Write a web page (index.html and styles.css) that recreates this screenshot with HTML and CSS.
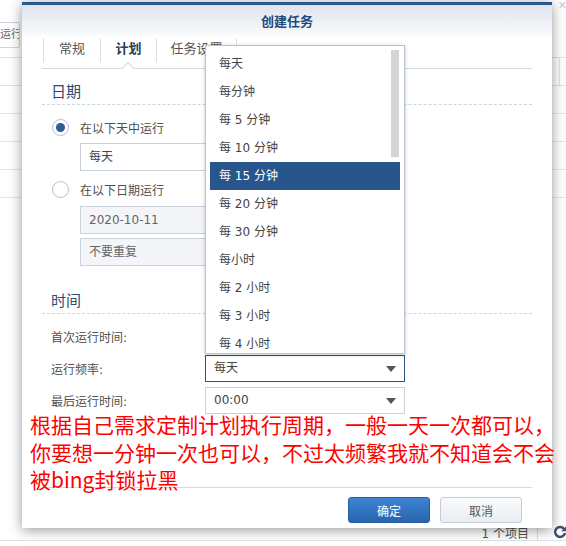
FILE: index.html
```html
<!DOCTYPE html>
<html lang="zh-CN">
<head>
<meta charset="utf-8">
<title>创建任务</title>
<link rel="stylesheet" href="styles.css">
</head>
<body>
<div class="app">
  <div class="app-title"><span class="app-close">✕</span></div>
  <div class="toolbar"><span class="tb-btn">运行</span></div>
  <div class="table">
    <div class="thead"><div class="th-cell"></div></div>
    <div class="trow"></div>
    <div class="trow"></div>
    <div class="trow"></div>
    <div class="trow"></div>
  </div>
  <div class="status">
    <span class="count">1 个项目</span>
    <span class="status-sep"></span>
    <svg class="refresh" width="14" height="14" viewBox="0 0 14 14"><path d="M11.3 4.2A5 5 0 1 0 12 8" fill="none" stroke="#3a5173" stroke-width="2.4"/><path d="M13.2 1.2V6.2H8.2Z" fill="#3a5173"/></svg>
  </div>
</div>

<div class="dialog">
  <div class="dlg-head">创建任务</div>
  <div class="tabs">
    <div class="tab t1">常规</div>
    <div class="tab t2 active">计划</div>
    <div class="tab t3">任务设置</div>
  </div>
  <div class="dlg-body">
    <div class="section-title">日期</div>
    <div class="radio-row"><span class="radio checked"></span><span>在以下天中运行</span></div>
    <div class="field f1"><div class="input">每天</div></div>
    <div class="radio-row r2"><span class="radio"></span><span>在以下日期运行</span></div>
    <div class="field f2"><div class="input disabled">2020-10-11</div></div>
    <div class="field f3"><div class="input disabled">不要重复</div></div>

    <div class="section-title s2">时间</div>
    <div class="form-row first"><span class="label">首次运行时间:</span><div class="select">00:00<i class="arrow"></i></div></div>
    <div class="form-row"><span class="label">运行频率:</span><div class="select focus">每天<i class="arrow"></i></div></div>
    <div class="form-row"><span class="label">最后运行时间:</span><div class="select">00:00<i class="arrow"></i></div></div>
  </div>
  <div class="dlg-foot">
    <button class="btn primary">确定</button>
    <button class="btn">取消</button>
  </div>
</div>

<div class="dropdown">
  <div class="thumb"></div>
  <div class="item">每天</div>
  <div class="item">每分钟</div>
  <div class="item">每 5 分钟</div>
  <div class="item">每 10 分钟</div>
  <div class="item hover">每 15 分钟</div>
  <div class="item">每 20 分钟</div>
  <div class="item">每 30 分钟</div>
  <div class="item">每小时</div>
  <div class="item">每 2 小时</div>
  <div class="item">每 3 小时</div>
  <div class="item">每 4 小时</div>
</div>

<div class="note">根据自己需求定制计划执行周期，一般一天一次都可以，<br>你要想一分钟一次也可以，不过太频繁我就不知道会不会<br>被bing封锁拉黑</div>
</body>
</html>
```

FILE: styles.css
```css
* { box-sizing: border-box; }
html, body {
  margin: 0;
  padding: 0;
  width: 566px;
  height: 546px;
  overflow: hidden;
  background: #fff;
  font-family: "DejaVu Sans", "Noto Sans CJK SC", sans-serif;
  font-size: 12px;
  color: #444;
}

/* background application */
.app {
  height: 546px;
  display: flex;
  flex-direction: column;
  padding-bottom: 5px;
}
.app-title {
  height: 22px;
  display: flex;
  justify-content: flex-end;
  align-items: flex-start;
}
.app-close {
  color: #c4c9cf;
  font-size: 11px;
  line-height: 11px;
  margin-right: -1px;
}
.toolbar {
  height: 26px;
  margin-bottom: 9px;
  display: flex;
}
.tb-btn {
  display: block;
  height: 26px;
  width: 40px;
  margin-left: -20px;
  border: 1px solid #cdd5de;
  border-radius: 2px;
  padding-left: 19px;
  line-height: 24px;
  color: #666;
  font-size: 11px;
  overflow: hidden;
  white-space: nowrap;
}
.table { display: flex; flex-direction: column; }
.thead {
  height: 29px;
  border-top: 1px solid #dde3ea;
  border-bottom: 1px solid #dde3ea;
  display: flex;
}
.th-cell {
  width: 560px;
  border-right: 1px solid #dde3ea;
}
.trow {
  height: 28px;
  border-bottom: 1px solid #e4e8ed;
}
.status {
  margin-top: auto;
  height: 19px;
  border-bottom: 1px solid #dde3ea;
  display: flex;
  justify-content: flex-end;
  align-items: center;
  padding-top: 2px;
}
.count { color: #555; font-size: 12px; }
.status-sep {
  width: 1px;
  height: 15px;
  background: #d6dce3;
  margin: 0 15px 0 8px;
}
.refresh { margin-right: -1px; }

/* dialog */
.dialog {
  position: absolute;
  left: 22px;
  top: 2px;
  width: 530px;
  height: 526px;
  background: #fff;
  border-top: 3px solid #2a5791;
  box-shadow: 0 2px 12px rgba(0, 0, 0, 0.42);
  display: flex;
  flex-direction: column;
}
.dlg-head {
  height: 32px;
  line-height: 32px;
  text-align: center;
  font-family: "Noto Sans CJK SC", sans-serif;
  font-weight: bold;
  font-size: 13px;
  color: #1f4a7d;
  background: linear-gradient(#dee4ed, #fbfcfd);
}
.tabs {
  height: 32px;
  margin: 0 20px;
  padding: 1px 0 0 1px;
  border-bottom: 1px solid #d3d9e0;
  display: flex;
  align-items: flex-start;
}
.tab {
  position: relative;
  height: 24px;
  line-height: 22px;
  text-align: center;
  border-left: 1px solid #d9dfe6;
  font-size: 13px;
  color: #555;
}
.t1 { width: 57px; }
.t2 { width: 56px; }
.t3 { width: 81px; border-right: 1px solid #d9dfe6; }
.tab.active { font-weight: bold; color: #2b3a4f; }
.tab.active::after {
  content: "";
  position: absolute;
  left: 22px;
  top: 26px;
  width: 9px;
  height: 9px;
  background: #fff;
  border-top: 1px solid #d3d9e0;
  border-left: 1px solid #d3d9e0;
  transform: rotate(45deg);
}
.dlg-body {
  flex: 1;
  padding: 0 20px;
}
.section-title {
  padding: 12px 0 3px 9px;
  line-height: 20px;
  font-size: 15px;
  color: #2c4a72;
  border-bottom: 1px dashed #cbd5e0;
  font-family: "Noto Sans CJK SC", sans-serif;
}
.section-title.s2 { margin-top: 12px; }
.radio-row {
  margin-top: 12px;
  height: 20px;
  padding-left: 10px;
  display: flex;
  align-items: center;
  color: #505050;
}
.radio-row.r2 { margin-top: 8px; }
.radio {
  width: 17px;
  height: 17px;
  border: 1px solid #b3bfcd;
  border-radius: 50%;
  margin-right: 11px;
  background: #fff;
  display: flex;
  align-items: center;
  justify-content: center;
}
.radio.checked::after {
  content: "";
  width: 9px;
  height: 9px;
  border-radius: 50%;
  background: #2d5c99;
}
.field { padding-left: 38px; }
.f1 { margin-top: 6px; }
.f2 { margin-top: 7px; }
.f3 { margin-top: 4px; }
.input {
  width: 300px;
  height: 28px;
  border: 1px solid #c8d1dc;
  padding-left: 8px;
  line-height: 26px;
  color: #444;
}
.input.disabled { background: #f3f5f8; color: #666; }
.form-row {
  margin-top: 5px;
  height: 27px;
  display: flex;
  align-items: center;
  padding-left: 9px;
  color: #505050;
}
.form-row.first { margin-top: 9px; }
.label { width: 154px; }
.select {
  position: relative;
  width: 200px;
  height: 27px;
  border: 1px solid #c8d1dc;
  padding-left: 8px;
  line-height: 25px;
  color: #444;
}
.select.focus { border-color: #2a5286; }
.arrow {
  position: absolute;
  right: 8px;
  top: 10px;
  width: 0;
  height: 0;
  border-left: 5px solid transparent;
  border-right: 5px solid transparent;
  border-top: 6px solid #555;
}
.dlg-foot {
  height: 41px;
  margin: 0 20px;
  border-top: 1px solid #d5dbe2;
  padding: 9px 10px 0 0;
  display: flex;
  justify-content: flex-end;
  align-items: flex-start;
  gap: 10px;
}
.btn {
  width: 82px;
  height: 26px;
  border-radius: 3px;
  font-family: "Noto Sans CJK SC", sans-serif;
  font-size: 12px;
  border: 1px solid #c4cdd7;
  background: linear-gradient(#fafbfc, #e8edf2);
  color: #555;
  padding: 0;
}
.btn.primary {
  border-color: #2a5e9e;
  background: linear-gradient(#3e85d3, #2864ae);
  color: #fff;
}

/* dropdown menu */
.dropdown {
  position: absolute;
  left: 205px;
  top: 45px;
  width: 200px;
  height: 309px;
  background: #fff;
  border: 1px solid #b9c4d1;
  box-shadow: 0 1px 4px rgba(0, 0, 0, 0.22);
  padding: 4px 4px 0 4px;
  overflow: hidden;
}
.thumb {
  position: absolute;
  left: 185px;
  top: 4px;
  width: 8px;
  height: 107px;
  background: #d4d4d4;
}
.item {
  height: 28px;
  line-height: 28px;
  padding-left: 9px;
  color: #444;
  white-space: pre;
}
.item.hover { background: #28568c; color: #fff; }

/* annotation */
.note {
  position: absolute;
  left: 30px;
  top: 411px;
  font-family: "Noto Sans CJK SC", sans-serif;
  font-size: 21px;
  line-height: 27.5px;
  color: #ff0000;
  white-space: nowrap;
}
```
